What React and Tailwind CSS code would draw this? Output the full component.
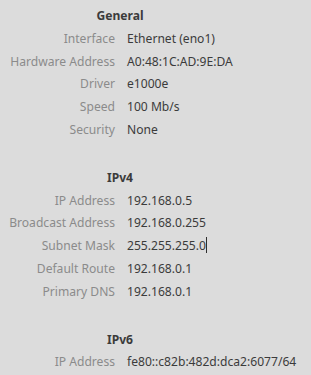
import React from 'react';

const sections = [
  {
    title: 'General',
    rows: [
      ['Interface', 'Ethernet (eno1)'],
      ['Hardware Address', 'A0:48:1C:AD:9E:DA'],
      ['Driver', 'e1000e'],
      ['Speed', '100 Mb/s'],
      ['Security', 'None'],
    ],
  },
  {
    title: 'IPv4',
    rows: [
      ['IP Address', '192.168.0.5'],
      ['Broadcast Address', '192.168.0.255'],
      ['Subnet Mask', '255.255.255.0', true],
      ['Default Route', '192.168.0.1'],
      ['Primary DNS', '192.168.0.1'],
    ],
  },
  {
    title: 'IPv6',
    rows: [['IP Address', 'fe80::c82b:482d:dca2:6077/64']],
  },
];

export default function App() {
  return (
    <div
      className="w-[311px] h-[375px] overflow-hidden bg-[#dcdcdc] pt-[5px] text-[12.1px] leading-[22.8px]"
      style={{ fontFamily: '"Noto Sans", "Open Sans", sans-serif' }}
    >
      {sections.map((s, i) => (
        <div key={s.title} className={i > 0 ? 'mt-[25px]' : ''}>
          <div className="w-[240px] text-center font-bold text-[#3b3b3b]">{s.title}</div>
          {s.rows.map(([label, value, caret]) => (
            <div key={label} className="flex">
              <div className="w-[115px] shrink-0 text-right text-[#8b8b8b]">{label}</div>
              <div className="pl-[12px] text-[#3b3b3b] whitespace-nowrap">
                {value}
                {caret && <span className="inline-block w-px h-[16px] bg-[#2e2e2e] align-[-3px]" />}
              </div>
            </div>
          ))}
        </div>
      ))}
    </div>
  );
}
